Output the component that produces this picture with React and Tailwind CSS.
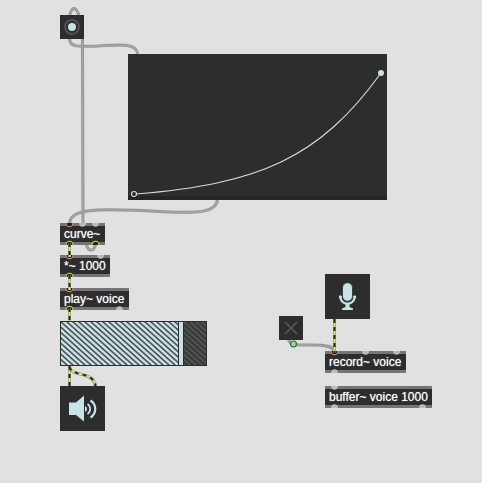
const GRAY = '#bcbcbc';

function Port({ x, kind, side }) {
  const d = side === 'in'
    ? `M${x - 3.5} 0 A3.5 3.8 0 0 0 ${x + 3.5} 0`
    : `M${x - 3.5} 3 A3.5 3.8 0 0 1 ${x + 3.5} 3`;
  if (kind === 'plain') return <path d={d} fill={GRAY} />;
  const stroke = kind === 'hot' ? '#e58a78' : '#d3df45';
  return <path d={d} fill="#222" stroke={stroke} strokeWidth="1.1" />;
}

function Ports({ list, side }) {
  return (
    <svg className="relative block h-[3px] w-full overflow-visible bg-[#757575]" aria-hidden="true">
      {list.map(([x, kind]) => (
        <Port key={x} x={x} kind={kind} side={side} />
      ))}
    </svg>
  );
}

function Box({ place, text, ins, outs }) {
  return (
    <div className={`absolute flex flex-col bg-[#2d2d2d] ${place}`}>
      <Ports list={ins} side="in" />
      <span className="block h-4 pl-1 text-[12px] leading-4 whitespace-nowrap text-white [text-shadow:0_0_1px_#ffffffb0]">{text}</span>
      <Ports list={outs} side="out" />
    </div>
  );
}

const boxes = [
  {
    place: 'left-[60px] top-[223px] w-[45px]',
    text: 'curve~',
    ins: [[9.5, 'hot'], [22.5, 'plain'], [35.5, 'plain']],
    outs: [[9.5, 'signal'], [35.5, 'signal']],
  },
  {
    place: 'left-[60px] top-[255px] w-[50px]',
    text: '*~ 1000',
    ins: [[9.5, 'hot'], [40.5, 'plain']],
    outs: [[9.5, 'signal']],
  },
  {
    place: 'left-[60px] top-[288px] w-[69px]',
    text: 'play~ voice',
    ins: [[9.5, 'hot']],
    outs: [[9.5, 'signal'], [59.5, 'plain']],
  },
  {
    place: 'left-[325px] top-[351px] w-[81px]',
    text: 'record~ voice',
    ins: [[9.5, 'hot'], [40.5, 'plain'], [71.5, 'plain']],
    outs: [[9.5, 'plain']],
  },
  {
    place: 'left-[325px] top-[386px] w-[107px]',
    text: 'buffer~ voice 1000',
    ins: [[9.5, 'plain']],
    outs: [[9.5, 'plain'], [97.5, 'plain']],
  },
];

const controlCords = [
  'M69.5 38 C69 49 84 46 98 46 C118 45 137 42 137.5 54',
  'M95.5 243 C95 252 88 253 86 243 L83 223 L82.5 39 L79 16 C76 6 72 6 69.5 16',
  'M217.5 199 C217 213 196 213 170 212 C135 210 118 209 98 210 C80 211 70 214 69.5 224',
  'M288.5 339 C289 346 298 345 311 345 C325 345 334 346 334.5 352',
];

const signalCords = [
  'M69.5 243 V257',
  'M69.5 275 V290',
  'M69.5 308 V321',
  'M69.5 366 V386',
  'M69.5 367 C71 377 94 371 95.5 386',
  'M334.5 319 V353',
];

function ControlCords() {
  return (
    <svg className="absolute inset-0 h-full w-full" fill="none" aria-hidden="true">
      {controlCords.map((d) => (
        <g key={d}>
          <path d={d} stroke="#909090" strokeWidth="3" />
          <path d={d} stroke="#adadad" strokeWidth="1.2" />
        </g>
      ))}
    </svg>
  );
}

function SignalCords() {
  return (
    <svg className="pointer-events-none absolute inset-0 h-full w-full" fill="none" aria-hidden="true">
      {signalCords.map((d) => (
        <g key={d}>
          <path d={d} stroke="#8b8f70" strokeWidth="3" />
          <path d={d} stroke="#c9f26c" strokeWidth="1.8" />
          <path d={d} stroke="#242424" strokeWidth="2" strokeDasharray="4 4" />
        </g>
      ))}
      <circle cx="293.5" cy="344" r="3" fill="#a8cfaa" stroke="#16801c" strokeWidth="1.2" />
    </svg>
  );
}

function Waveform() {
  return (
    <svg className="absolute top-[321px] left-[60px] h-[45px] w-[147px]" viewBox="0 0 147 45" role="img" aria-label="Waveform">
      <defs>
        <pattern id="hatch" width="6" height="5.4" patternUnits="userSpaceOnUse">
          <path d="M-6 -5.4 L12 10.8 M-6 0 L6 10.8 M0 -5.4 L12 5.4" stroke="#2d2d2d" strokeWidth="1.3" />
        </pattern>
      </defs>
      <rect width="147" height="45" fill="#2d2d2d" />
      <rect x="1" y="1" width="117" height="43" fill="#c9e2e6" />
      <rect x="124" y="1" width="22" height="43" fill="#505050" />
      <rect x="1" y="1" width="145" height="43" fill="url(#hatch)" />
      <rect x="119" y="1" width="4" height="43" fill="#c9e2e6" />
      <path d="M118.5 1 V44 M123.5 1 V44" stroke="#2d2d2d" />
    </svg>
  );
}

export default function App() {
  return (
    <main className="relative min-h-screen w-full overflow-hidden bg-[#e1e1e1] font-['Liberation_Sans',Arial,sans-serif]">
      <ControlCords />

      <button aria-label="Bang" className="absolute top-[15px] left-[60px] size-6 bg-[#2d2d2d]">
        <svg viewBox="0 0 24 24" className="block size-6">
          <circle cx="12" cy="12" r="7" fill="none" stroke="#505050" strokeWidth="2" />
          <circle cx="12" cy="12" r="4" fill="#c9e2e6" />
        </svg>
      </button>

      <svg className="absolute top-[54px] left-[128px] h-[146px] w-[259px] bg-[#2d2d2d]" viewBox="0 0 259 146" role="img" aria-label="Curve from zero to one">
        <rect y="142" width="259" height="4" fill="#262427" />
        <path d="M8 140 C130 130 191 105 253 19" fill="none" stroke="#c9e2e6" strokeWidth="1.1" />
        <circle cx="6" cy="140" r="2.5" fill="#2d2d2d" stroke="#c9e2e6" strokeWidth="1.1" />
        <circle cx="253" cy="19" r="3" fill="#c9e2e6" />
      </svg>

      {boxes.map((box) => (
        <Box key={box.text} {...box} />
      ))}

      <Waveform />

      <button aria-label="Audio output" className="absolute top-[386px] left-[60px] size-[45px] bg-[#2d2d2d]">
        <svg viewBox="0 0 45 45" className="block size-[45px]" fill="none" stroke="#c9e2e6">
          <path d="M9 16.5 H16 L24 9.5 V35.5 L16 29 H9 Z" fill="#c9e2e6" stroke="none" />
          <path d="M25 20 A3.2 3.2 0 0 1 25 26 Z" fill="#c9e2e6" stroke="none" />
          <path d="M27.5 18 A6 6 0 0 1 27.5 28" strokeWidth="1.7" />
          <path d="M30.5 14.5 A10 10 0 0 1 30.5 31.5" strokeWidth="2.2" />
        </svg>
      </button>

      <button aria-label="Audio input" className="absolute top-[274px] left-[325px] size-[45px] bg-[#2d2d2d]">
        <svg viewBox="0 0 45 45" className="block size-[45px]">
          <path d="M15.3 22.5 C15.3 32 29.7 32 29.7 22.5" fill="none" stroke="#c9e2e6" strokeWidth="2.2" strokeLinecap="round" />
          <circle cx="15.3" cy="23" r="1.6" fill="#c9e2e6" />
          <circle cx="29.7" cy="23" r="1.6" fill="#c9e2e6" />
          <rect x="17.5" y="8.7" width="10" height="18.6" rx="5" fill="#c9e2e6" stroke="#2d2d2d" strokeWidth="0.8" />
          <path d="M20.5 29 H24.5 V33 L28 34.5 V36 H17 V34.5 L20.5 33 Z" fill="#c9e2e6" />
        </svg>
      </button>

      <label className="absolute top-[316px] left-[279px] block size-6 bg-[#2d2d2d]">
        <input type="checkbox" aria-label="Record toggle" className="block size-6 appearance-none" />
        <svg viewBox="0 0 24 24" className="pointer-events-none absolute inset-0 size-6">
          <path d="M6 6 L18 18 M18 6 L6 18" stroke="#565656" strokeWidth="1.6" />
        </svg>
      </label>

      <SignalCords />
    </main>
  );
}
